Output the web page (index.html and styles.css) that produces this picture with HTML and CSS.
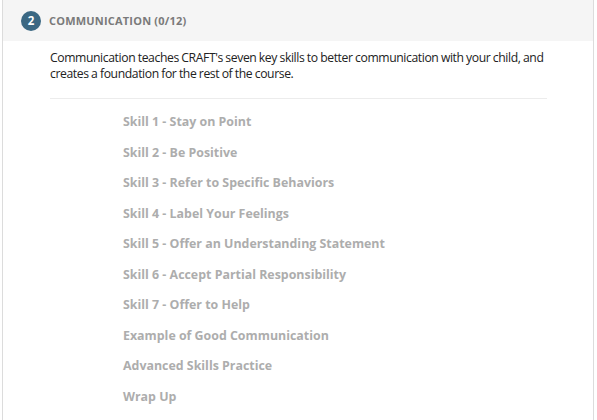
FILE: index.html
```html
<!DOCTYPE html>
<html>
<head>
<meta charset="utf-8">
<link rel="stylesheet" href="styles.css">
</head>
<body>
<div class="panel">
  <div class="header">
    <span class="badge">2</span>
    <span class="title">COMMUNICATION (0/12)</span>
  </div>
  <div class="body">
    <p class="intro">Communication teaches CRAFT's seven key skills to better communication with your child, and creates a foundation for the rest of the course.</p>
    <ul class="lessons">
      <li>Skill 1 - Stay on Point</li>
      <li>Skill 2 - Be Positive</li>
      <li>Skill 3 - Refer to Specific Behaviors</li>
      <li>Skill 4 - Label Your Feelings</li>
      <li>Skill 5 - Offer an Understanding Statement</li>
      <li>Skill 6 - Accept Partial Responsibility</li>
      <li>Skill 7 - Offer to Help</li>
      <li>Example of Good Communication</li>
      <li>Advanced Skills Practice</li>
      <li>Wrap Up</li>
    </ul>
  </div>
</div>
</body>
</html>
```
FILE: styles.css
```css
html, body {
  margin: 0;
  padding: 0;
  background: #fff;
}
body {
  font-family: "Open Sans", "Liberation Sans", sans-serif;
  width: 597px;
  height: 420px;
  overflow: hidden;
}
.panel {
  margin-left: 2px;
  width: 592px;
  height: 420px;
  border-left: 1px solid #dcdcdc;
  border-right: 1px solid #dcdcdc;
  box-sizing: border-box;
}
.header {
  height: 41px;
  background: #f5f5f5;
  display: flex;
  align-items: center;
  padding-left: 18px;
  gap: 8px;
}
.badge {
  width: 20px;
  height: 20px;
  border-radius: 50%;
  background: #3b6883;
  color: #fff;
  font-weight: 700;
  font-size: 11.5px;
  display: flex;
  align-items: center;
  justify-content: center;
  line-height: 1;
}
.title {
  font-size: 11px;
  font-weight: 700;
  letter-spacing: 0.2px;
  color: #7a7a7a;
}
.body {
  padding: 9px 46px 0 47px;
}
.intro {
  margin: 0;
  font-size: 12.2px;
  letter-spacing: -0.4px;
  word-spacing: -0.3px;
  line-height: 16px;
  color: #222;
  padding-bottom: 16px;
  border-bottom: 1px solid #ececec;
}
.lessons {
  list-style: none;
  margin: 0;
  padding: 8px 0 0 73px;
}
.lessons li {
  font-size: 12.4px;
  font-weight: 700;
  color: #adadad;
  line-height: 30.55px;
}
```
